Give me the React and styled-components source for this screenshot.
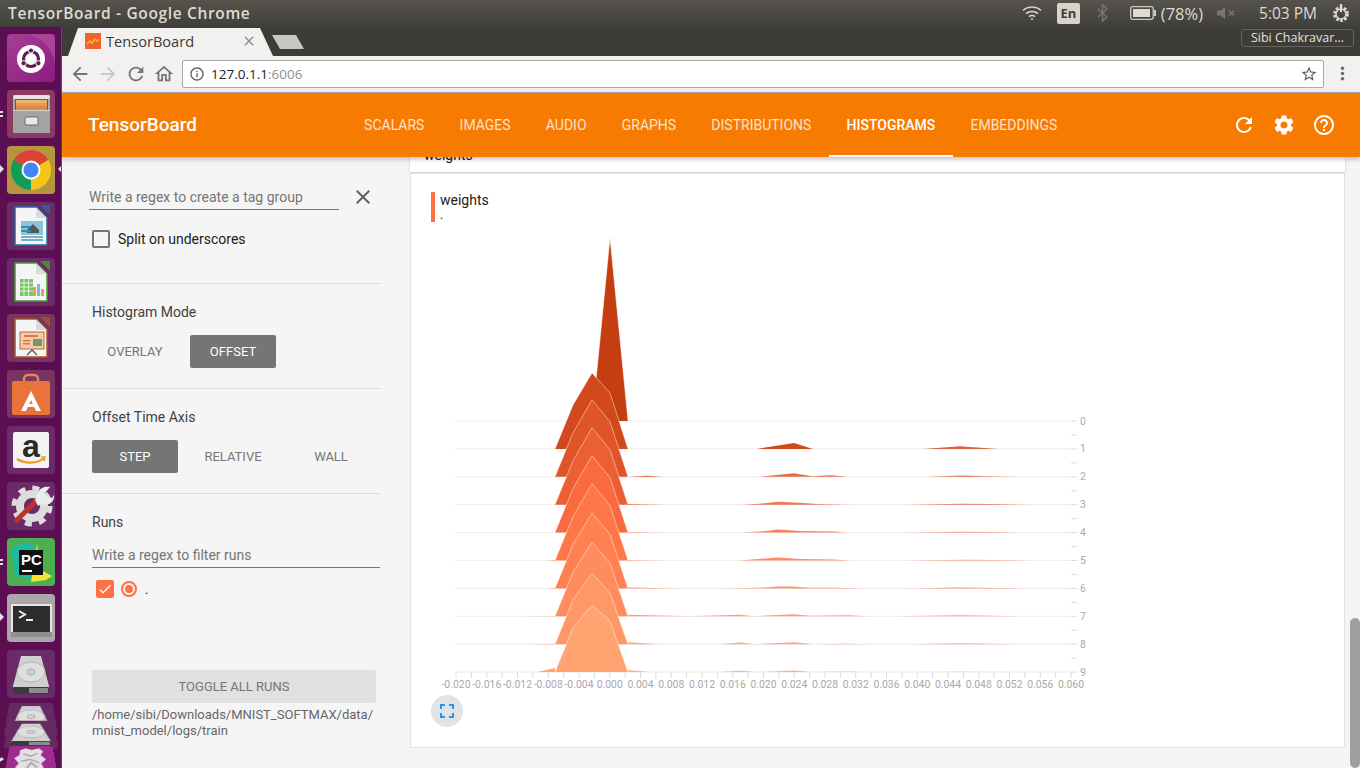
import React from 'react';
import styled, { createGlobalStyle } from 'styled-components';
import {
  MdArrowBack,
  MdArrowForward,
  MdCheck,
  MdClose,
  MdFullscreen,
  MdHelpOutline,
  MdInfoOutline,
  MdMoreVert,
  MdOutlineHome,
  MdRefresh,
  MdSettings,
  MdStarBorder,
} from 'react-icons/md';

const GlobalStyle = createGlobalStyle`
  html, body {
    margin: 0;
    padding: 0;
    overflow: hidden;
    background: #f5f5f5;
    font-family: Roboto, "Liberation Sans", sans-serif;
  }
  * { box-sizing: border-box; }
`;

const Screen = styled.div`
  width: 1360px;
  height: 768px;
  display: flex;
  flex-direction: column;
  overflow: hidden;
`;

/* ---------- ubuntu panel ---------- */

const TopPanel = styled.div`
  height: 27px;
  flex: none;
  display: flex;
  align-items: center;
  padding: 0 9px 1px 8px;
  background: linear-gradient(#55534c, #403f3a);
  color: #dfdbd2;
  font-family: "Open Sans", "Liberation Sans", sans-serif;
`;

const WindowTitle = styled.div`
  font-size: 15.5px;
  font-weight: 600;
  letter-spacing: 0.65px;
  margin-right: auto;
`;

const Indicator = styled.div`
  margin-left: ${props => props.$ml}px;
  display: flex;
  align-items: center;
  font-size: ${props => props.$size || 15}px;
  white-space: nowrap;
`;

const LangBox = styled.div`
  width: 23px;
  height: 21px;
  border-radius: 2px;
  background: #d8d4cc;
  color: #3c3b37;
  font-size: 13px;
  font-weight: 700;
  display: flex;
  align-items: center;
  justify-content: center;
`;

const Body = styled.div`
  flex: 1;
  min-height: 0;
  display: flex;
`;

/* ---------- launcher ---------- */

const Launcher = styled.div`
  width: 62px;
  flex: none;
  display: flex;
  flex-direction: column;
  gap: 8px;
  padding: 7px 0 0 7px;
  background: #5b0f52;
  border-right: 1px solid #7a3d72;
  overflow: hidden;
`;

const Tile = styled.div`
  position: relative;
  width: 48px;
  height: 48px;
  flex: none;
  border-radius: 4px;
  background: ${props => props.$bg};
  margin-top: ${props => props.$mt || 0}px;
  ${props => props.$tilt && `transform: perspective(150px) rotateX(${props.$tilt}deg);`}
  svg { display: block; }
`;

const Pip = styled.span`
  position: absolute;
  left: -7px;
  top: 21px;
  width: 3px;
  height: 2px;
  background: #e8e2e6;
  box-shadow: 0 4px 0 #e8e2e6;
`;

const Arrow = styled.span`
  position: absolute;
  top: 19px;
  ${props => (props.$right ? 'right: -7px;' : 'left: -7px;')}
  border-top: 4px solid transparent;
  border-bottom: 4px solid transparent;
  ${props =>
    props.$right ? 'border-right: 4px solid #e8e2e6;' : 'border-left: 4px solid #e8e2e6;'}
`;

const Icon = ({ children }) => (
  <svg width="48" height="48" viewBox="0 0 48 48">
    {children}
  </svg>
);

const UbuntuIcon = () => (
  <Icon>
    <path d="M20 0h24a4 4 0 0 1 4 4v24C44 12 34 4 20 0z" fill="#b95aa8" opacity="0.5" />
    <circle cx="24" cy="25" r="14" fill="#fff" />
    <circle cx="24" cy="25" r="7.500" fill="none" stroke="#5e1a57" strokeWidth="3.200" />
    <circle cx="24" cy="16.500" r="2.600" fill="#5e1a57" stroke="#fff" strokeWidth="1" />
    <circle cx="16.600" cy="29.200" r="2.600" fill="#5e1a57" stroke="#fff" strokeWidth="1" />
    <circle cx="31.400" cy="29.200" r="2.600" fill="#5e1a57" stroke="#fff" strokeWidth="1" />
  </Icon>
);

const FilesIcon = () => (
  <Icon>
    <rect x="6" y="5" width="37" height="38" rx="2" fill="#a9a9a7" />
    <rect x="6" y="5" width="37" height="4" rx="2" fill="#e4e4e2" />
    <rect x="8" y="9" width="33" height="11" fill="#6f5a45" />
    <rect x="9" y="10" width="31" height="3" fill="#f0b070" />
    <rect x="9" y="13" width="31" height="3" fill="#e89a55" />
    <rect x="9" y="16" width="31" height="4" fill="#dc8a48" />
    <rect x="6" y="20" width="37" height="23" fill="#a3a3a1" />
    <rect x="6" y="20" width="37" height="1" fill="#d5d5d3" />
    <rect x="18" y="27" width="13" height="8" rx="1" fill="#e9e9e7" stroke="#6c6c6a" />
  </Icon>
);

const ChromeIcon = () => (
  <Icon>
    <path d="M6.700 14a20 20 0 0 1 34.600 0L24 24z" fill="#db4437" />
    <path d="M41.300 14A20 20 0 0 1 24 44L24 24z" fill="#f5c518" />
    <path d="M24 44A20 20 0 0 1 6.700 14L24 24z" fill="#0f9d58" />
    <circle cx="24" cy="24" r="9.500" fill="#fff" />
    <circle cx="24" cy="24" r="7.600" fill="#4285f4" />
  </Icon>
);

const DocIcon = ({ edge, children }) => (
  <Icon>
    <path d="M33 3h10v10z" fill={edge} opacity="0.8" />
    <path d="M8 5h21l11 11v27H8z" fill="#f4f6f6" stroke={edge} strokeWidth="1.500" />
    <path d="M29 5v11h11z" fill="#d8dcdc" />
    {children}
  </Icon>
);

const WriterIcon = () => (
  <DocIcon edge="#1f6e9c">
    <rect x="14" y="19" width="22" height="14" fill="#8ec3dc" />
    <path d="M20 28l6-6 6 6v3H20z" fill="#4a5d52" />
    <rect x="14" y="34" width="22" height="2" fill="#6db0d2" />
    <rect x="14" y="37" width="22" height="2" fill="#6db0d2" />
    <rect x="14" y="24" width="10" height="2" fill="#2f8ab8" />
    <rect x="14" y="28" width="10" height="2" fill="#2f8ab8" />
  </DocIcon>
);

const CalcIcon = () => (
  <DocIcon edge="#43a02c">
    <rect x="13" y="21" width="13" height="17" fill="#7ac465" />
    <path
      d="M13 25h13M13 29h13M13 33h13M17 21v17M21.500 21v17"
      stroke="#e6f5e0"
      strokeWidth="1"
    />
    <rect x="26" y="29" width="3" height="9" fill="#e4a24a" />
    <rect x="30" y="26" width="3" height="12" fill="#7fb6d8" />
    <rect x="34" y="31" width="3" height="7" fill="#e4a24a" />
  </DocIcon>
);

const ImpressIcon = () => (
  <DocIcon edge="#a8562a">
    <rect x="13" y="18" width="24" height="17" fill="#f6c9ac" stroke="#b56a3c" />
    <rect x="17" y="21" width="14" height="2" fill="#d77a40" />
    <rect x="16" y="26" width="7" height="1.500" fill="#d77a40" />
    <rect x="16" y="29" width="7" height="1.500" fill="#d77a40" />
    <rect x="26" y="25" width="9" height="7" fill="#6f9c5e" />
    <path d="M20 41l5-5 5 5" fill="none" stroke="#555" strokeWidth="1.300" />
  </DocIcon>
);

const StoreIcon = () => (
  <Icon>
    <path d="M17 14v-5a4 4 0 0 1 4-4h6a4 4 0 0 1 4 4v5" fill="none" stroke="#e8855a" strokeWidth="2.500" />
    <rect x="5" y="11" width="38" height="34" rx="2" fill="#e8743c" />
    <path d="M24 21l10 20h-5l-5-11-5 11h-5z" fill="#fff" />
    <rect x="18" y="34" width="12" height="3" fill="#fff" />
  </Icon>
);

const AmazonGlyph = styled.text`
  font-family: "Liberation Sans", sans-serif;
  font-size: 32px;
  font-weight: 700;
  fill: #2a2a2a;
`;

const AmazonIcon = () => (
  <Icon>
    <rect x="6" y="6" width="36" height="36" rx="2" fill="#f4f3f3" />
    <AmazonGlyph x="24" y="31" textAnchor="middle">
      a
    </AmazonGlyph>
    <path d="M10 33c8 5 20 5 27-1" fill="none" stroke="#f39a1f" strokeWidth="2.200" />
    <path d="M34 31l4 0-1 4" fill="none" stroke="#f39a1f" strokeWidth="1.500" />
  </Icon>
);

const ToolsIcon = () => (
  <Icon>
    <circle cx="25" cy="24" r="18" fill="none" stroke="#dcdcdc" strokeWidth="5" strokeDasharray="7 7.100" />
    <circle cx="25" cy="24" r="12" fill="none" stroke="#dcdcdc" strokeWidth="8" />
    <path d="M10 38L31 17" stroke="#c0332b" strokeWidth="5" strokeLinecap="round" />
    <path d="M28 18l3-8c2-4 7-6 12-5l-5 6 2 4 5 1 2-3c1 6-5 12-13 9l-3 2z" fill="#ececec" />
  </Icon>
);

const PcGlyph = styled.text`
  font-family: "Liberation Sans", sans-serif;
  font-size: 15px;
  font-weight: 700;
  fill: #fff;
`;

const PyCharmIcon = () => (
  <Icon>
    <path d="M4 10l16-6 14 8-4 30-22-4z" fill="#21b8a4" />
    <path d="M30 6l4 26 11 6-6 4-15 2z" fill="#f2e33a" />
    <rect x="12" y="12" width="24" height="25" fill="#111" />
    <PcGlyph x="14" y="27">
      PC
    </PcGlyph>
    <rect x="15" y="32" width="10" height="2" fill="#fff" />
  </Icon>
);

const TerminalIcon = () => (
  <Icon>
    <rect x="4" y="10" width="41" height="33" rx="1" fill="#e7e7e7" />
    <rect x="4" y="38" width="41" height="5" fill="#8f8f8f" />
    <rect x="6" y="12" width="37" height="26" fill="#2c2c2c" />
    <path d="M12 17l6 3.500-6 3.500" fill="none" stroke="#eee" strokeWidth="2" />
    <rect x="19" y="25" width="7" height="2" fill="#eee" />
  </Icon>
);

const DiskIcon = () => (
  <Icon>
    <path d="M14 6h20l8 30v6a2 2 0 0 1-2 2H8a2 2 0 0 1-2-2v-6z" fill="#cfcfcf" />
    <ellipse cx="24" cy="22" rx="14" ry="10" fill="#dedede" stroke="#b5b5b5" />
    <ellipse cx="24" cy="22" rx="4" ry="3" fill="#cfcfcf" stroke="#aaa" />
    <rect x="6" y="37" width="36" height="7" rx="1" fill="#3a3a3a" />
    <rect x="22" y="38" width="19" height="5" fill="#8c8c8c" />
  </Icon>
);

const TrashIcon = () => (
  <Icon>
    <path d="M12 8l6-4 7 3 8-3 4 6-3 6 5 7-5 6 2 7-8 2-6 6-8-3-5-6 3-6-5-8 5-5z" fill="#e3e0e3" />
    <path d="M16 14l8 4 7-5M14 26l9-3 9 5M20 36l4-8 6 7" stroke="#a9a3a8" strokeWidth="2" fill="none" />
  </Icon>
);

/* ---------- chrome ---------- */

const Browser = styled.div`
  flex: 1;
  min-width: 0;
  display: flex;
  flex-direction: column;
`;

const TabStrip = styled.div`
  height: 29px;
  flex: none;
  display: flex;
  background: #3d3c37;
  padding: 1px 6px 0 6px;
`;

const Tab = styled.div`
  width: 205px;
  height: 28px;
  display: flex;
  align-items: center;
  padding: 0 16px 2px 17px;
  background: #f2f1f0;
  clip-path: polygon(0 100%, 10px 0, 192px 0, 100% 100%);
  color: #3a3a3a;
  font-family: "Open Sans", "Liberation Sans", sans-serif;
  font-size: 14.6px;
`;

const Favicon = styled.svg`
  width: 16px;
  height: 16px;
  margin-right: 5px;
  flex: none;
`;

const TabClose = styled(MdClose)`
  margin-left: auto;
  color: #8b8b8b;
  font-size: 16px;
`;

const NewTab = styled.div`
  width: 32px;
  height: 14px;
  margin: 7px 0 0 -1px;
  background: #c9c7c4;
  clip-path: polygon(0 0, 24px 0, 100% 100%, 8px 100%);
`;

const AccountChip = styled.div`
  margin: 1px 0 0 auto;
  width: 113px;
  height: 18px;
  border: 1px solid #66645f;
  border-radius: 3px;
  color: #e4e2dc;
  font-family: "Open Sans", "Liberation Sans", sans-serif;
  font-size: 12.5px;
  line-height: 16px;
  text-align: center;
  white-space: nowrap;
`;

const Toolbar = styled.div`
  height: 37px;
  flex: none;
  display: flex;
  align-items: center;
  padding: 0 0 1px 4px;
  background: #f2f1f0;
  border-bottom: 1px solid #adadad;
`;

const NavButton = styled.div`
  width: 28px;
  display: flex;
  justify-content: center;
  color: ${props => (props.$off ? '#c9c9c9' : '#757575')};
  font-size: ${props => props.$size || 21}px;
  svg { display: block; }
`;

const UrlBox = styled.div`
  flex: 1;
  height: 28px;
  margin-left: 4px;
  display: flex;
  align-items: center;
  padding: 0 5px 0 6px;
  background: #fff;
  border: 1px solid #a9a9a9;
  border-radius: 2px;
  font-family: "Open Sans", "Liberation Sans", sans-serif;
  font-size: 13.5px;
  color: #222;
  svg { display: block; color: #5f5f5f; }
`;

const UrlHost = styled.span`
  margin-left: 6px;
`;

const UrlPort = styled.span`
  color: #8f8f8f;
`;

const UrlStar = styled.span`
  margin-left: auto;
  display: flex;
`;

const MenuButton = styled.div`
  width: 36px;
  display: flex;
  justify-content: center;
  color: #6b6b6b;
  font-size: 21px;
  svg { display: block; }
`;

/* ---------- tensorboard header ---------- */

const Header = styled.div`
  position: relative;
  z-index: 2;
  height: 64px;
  flex: none;
  display: flex;
  align-items: stretch;
  padding: 0 24px 0 26px;
  background: #f77b00;
  box-shadow: 0 2px 5px rgba(0, 0, 0, 0.26);
  color: #fff;
`;

const Brand = styled.div`
  width: 258.5px;
  font-size: 19px;
  font-weight: 500;
  line-height: 64px;
`;

const Tabs = styled.div`
  display: flex;
`;

const NavTab = styled.div`
  padding: 0 17.6px;
  line-height: 64px;
  font-size: 14px;
  font-weight: ${props => (props.$active ? 500 : 400)};
  color: ${props => (props.$active ? '#fff' : 'rgba(255, 255, 255, 0.8)')};
  box-shadow: ${props => (props.$active ? 'inset 0 -2px 0 #fff' : 'none')};
`;

const HeaderActions = styled.div`
  margin-left: auto;
  display: flex;
  align-items: center;
  gap: 16px;
  font-size: 24px;
  svg { display: block; }
`;

/* ---------- sidebar ---------- */

const Content = styled.div`
  flex: 1;
  min-height: 0;
  display: flex;
  background: #f5f5f5;
`;

const Sidebar = styled.div`
  width: 318px;
  flex: none;
`;

const Section = styled.div`
  padding: ${props => props.$pad || '20px 0 20px 30px'};
  border-bottom: ${props => (props.$last ? 'none' : '1px solid #dcdcdc')};
`;

const RegexRow = styled.div`
  display: flex;
  align-items: center;
`;

const TextInput = styled.div`
  width: ${props => props.$w}px;
  height: 26px;
  margin-top: ${props => props.$mt || 0}px;
  border-bottom: 1px solid #757575;
  color: #757575;
  font-size: 14px;
  line-height: 26px;
`;

const ClearButton = styled(MdClose)`
  margin-left: 12px;
  color: #616161;
  font-size: 24px;
`;

const CheckRow = styled.div`
  display: flex;
  align-items: center;
  margin: 20px 0 0 3px;
  font-size: 14px;
  color: #212121;
`;

const CheckBox = styled.span`
  width: 18px;
  height: 18px;
  flex: none;
  display: flex;
  align-items: center;
  justify-content: center;
  border-radius: 2px;
  border: ${props => (props.$checked ? 'none' : '2px solid #757575')};
  background: ${props => (props.$checked ? '#ff7043' : 'transparent')};
  color: #fff;
  font-size: 16px;
`;

const CheckLabel = styled.span`
  margin-left: 8px;
`;

const SectionTitle = styled.div`
  font-size: 14px;
  line-height: 16px;
  color: #424242;
`;

const ButtonGroup = styled.div`
  margin-top: 15px;
  display: grid;
  grid-template-columns: repeat(3, 86px);
  gap: 12px;
`;

const ModeButton = styled.div`
  height: 33px;
  border-radius: 2px;
  text-align: center;
  font-size: 13px;
  line-height: 33px;
  background: ${props => (props.$active ? '#757575' : 'transparent')};
  color: ${props => (props.$active ? '#fff' : '#757575')};
`;

const RunRow = styled.div`
  margin: 12px 0 0 4px;
  display: flex;
  align-items: center;
  font-size: 13px;
  color: #212121;
`;

const RadioRing = styled.span`
  margin-left: 7px;
  width: 16px;
  height: 16px;
  flex: none;
  display: flex;
  align-items: center;
  justify-content: center;
  border: 2px solid #ff7043;
  border-radius: 50%;
  &::after {
    content: '';
    width: 8px;
    height: 8px;
    border-radius: 50%;
    background: #ff7043;
  }
`;

const RunName = styled.span`
  margin-left: 8px;
`;

const ToggleAll = styled.div`
  margin-top: 72px;
  width: 284px;
  height: 33px;
  border-radius: 2px;
  background: #e0e0e0;
  color: #757575;
  font-size: 13px;
  line-height: 33px;
  text-align: center;
`;

const LogDir = styled.div`
  margin-top: 4px;
  width: 288px;
  font-size: 13px;
  line-height: 16px;
  color: #666;
`;

/* ---------- main ---------- */

const Main = styled.div`
  flex: 1;
  min-width: 0;
  padding: 0 5px 0 30px;
`;

const HiddenCard = styled.div`
  height: 15px;
  overflow: hidden;
  background: #fff;
  box-shadow: 0 1px 2px rgba(0, 0, 0, 0.2);
  padding-left: 14px;
  font-size: 14px;
  line-height: 16px;
  color: #212121;
`;

const HiddenCardTitle = styled.div`
  margin-top: -10px;
`;

const Card = styled.div`
  margin-top: 1px;
  height: 575px;
  padding: 18px 0 0 20px;
  background: #fff;
  border: 1px solid #e2e2e2;
`;

const ChartTitle = styled.div`
  height: 30px;
  padding-left: 5px;
  border-left: 4px solid #ff7043;
  color: #212121;
`;

const ChartTag = styled.div`
  font-size: 14px;
  line-height: 16px;
`;

const ChartRun = styled.div`
  font-size: 12px;
  line-height: 14px;
`;

const ChartSvg = styled.svg`
  display: block;
  margin-top: 8px;
`;

const AxisText = styled.text`
  font-family: Roboto, sans-serif;
  font-size: 10.4px;
  fill: #a9a9a9;
`;

const FitButton = styled.div`
  margin-top: 3px;
  width: 32px;
  height: 32px;
  border-radius: 50%;
  background: #e3e3e3;
  color: #2196f3;
  font-size: 24px;
  display: flex;
  align-items: center;
  justify-content: center;
`;

const ScrollTrack = styled.div`
  width: 10px;
  flex: none;
  display: flex;
  flex-direction: column;
  justify-content: flex-end;
`;

const ScrollThumb = styled.div`
  height: 150px;
  border-radius: 5px;
  background: #9e9e9e;
`;

/* ---------- histogram data ---------- */

const xOf = v => 609.75 + v * 7687.5;
const rowY = i => 421 + i * 27.9;

const tops = [0, 76, 77, 77, 77, 77, 75, 74, 71, 67];
const knees = [0, 56, 55, 55, 55, 55, 54, 53, 51, 51];

// extra bumps per step, [x, height] pairs
const bumps = [
  [],
  [[757, 0], [794, 6], [813, 0]],
  [[628, 0], [647, 1], [663, 0]],
  [[628, 0.6], [665, 0]],
  [[628, 0.5], [662, 0]],
  [[547, 0], [555, 0.4]],
  [[545, 0], [555, 0.3]],
  [[523, 0], [555, 0.4]],
  [[530, 0], [555, 0.4]],
  [[538, 0], [555, 4]],
];

const sideBumps = [
  [],
  [[923, 0], [960, 2.7], [998, 0]],
  [[759, 0], [794, 3.5], [812, 0.5], [831, 1.5], [847, 0], [927, 0], [962, 1.3], [987, 0.6], [1023, 0]],
  [[741, 0], [760, 1], [778, 3], [800, 2], [817, 0.7], [850, 0], [905, 0], [960, 1], [993, 0.6], [1032, 0]],
  [[743, 0], [760, 1], [778, 3], [800, 1.6], [833, 1], [847, 0], [907, 0], [960, 0.8], [993, 0.6], [1022, 0]],
  [[628, 0.6], [665, 0], [740, 0], [778, 3], [800, 1.6], [833, 1], [850, 0], [905, 0], [967, 0.8], [1030, 0]],
  [[628, 1], [678, 0], [723, 0], [760, 0.6], [778, 2], [793, 2], [810, 0.6], [833, 0.6], [865, 0], [908, 0], [957, 1], [1020, 0]],
  [[628, 1.5], [690, 0], [740, 1.6], [753, 0], [793, 2], [810, 0.5], [847, 1], [868, 0], [897, 0], [960, 1], [1025, 0]],
  [[628, 2], [660, 0], [720, 0], [740, 1.6], [755, 0], [795, 2], [813, 0], [847, 0.5], [867, 0], [910, 0], [960, 1], [1017, 0]],
  [[628, 2], [650, 0], [720, 0], [740, 1.3], [757, 0], [795, 1.5], [810, 0], [850, 0.5], [863, 0], [913, 0], [960, 0.3], [1023, 0]],
];

const mix = (a, b, t) => a.map((c, i) => Math.round(c + (b[i] - c) * t));
const rowColor = i => {
  const dark = [197, 62, 18];
  const mid = [255, 112, 67];
  const light = [255, 163, 113];
  const c = i < 4.5 ? mix(dark, mid, i / 4.5) : mix(mid, light, (i - 4.5) / 4.5);
  return `rgb(${c.join(',')})`;
};

const toPath = (pts, y) =>
  `M${pts[0][0]} ${y}` + pts.map(([x, h]) => `L${x} ${(y - h).toFixed(1)}`).join('') + `L${pts[pts.length - 1][0]} ${y}Z`;

const peakPoints = i =>
  i === 0
    ? [[592, 0], [610, 183], [628, 0]]
    : [[555, 0], [573, 44], [592, tops[i]], [610, knees[i]], [628, 0]];

const Histogram = () => {
  const steps = [0, 1, 2, 3, 4, 5, 6, 7, 8, 9];
  const labels = Array.from({ length: 21 }, (_, i) => -0.02 + i * 0.004);
  const ticks = Array.from({ length: 41 }, (_, i) => -0.02 + i * 0.002);
  return (
    <ChartSvg width="680" height="462" viewBox="431 230 680 462">
      {steps.map(i => (
        <g key={i}>
          <line x1="455" x2="1071" y1={rowY(i)} y2={rowY(i)} stroke="#efefef" strokeWidth="1.200" />
          <line x1="1071" x2="1077" y1={rowY(i)} y2={rowY(i)} stroke="#dcdcdc" />
          {i < 9 && (
            <line x1="1071" x2="1077" y1={rowY(i) + 14} y2={rowY(i) + 14} stroke="#dcdcdc" />
          )}
          <AxisText x="1080" y={rowY(i) + 3.5}>
            {i}
          </AxisText>
        </g>
      ))}
      {ticks.map(t => (
        <line key={t} x1={xOf(t)} x2={xOf(t)} y1={rowY(9)} y2={rowY(9) + 6} stroke="#dcdcdc" />
      ))}
      {labels.map(v => (
        <AxisText key={v} x={xOf(v)} y="688" textAnchor="middle">
          {v.toFixed(3)}
        </AxisText>
      ))}
      {steps.map(i => {
        const peak = peakPoints(i);
        const y = rowY(i);
        const outline = peak.map(([x, h]) => `${x},${(y - h).toFixed(1)}`).join(' ');
        return (
          <g key={i} fill={rowColor(i)}>
            {bumps[i].length > 0 && <path d={toPath(bumps[i], y)} />}
            {sideBumps[i].length > 0 && <path d={toPath(sideBumps[i], y)} opacity="0.85" />}
            <path d={toPath(peak, y)} />
            <polyline points={outline} fill="none" stroke="rgba(255,255,255,0.45)" strokeWidth="1" />
          </g>
        );
      })}
    </ChartSvg>
  );
};

const TABS = ['Scalars', 'Images', 'Audio', 'Graphs', 'Distributions', 'Histograms', 'Embeddings'];

export default function App() {
  return (
    <Screen>
      <GlobalStyle />
      <TopPanel>
        <WindowTitle>TensorBoard - Google Chrome</WindowTitle>
        <Indicator $ml={0}>
          <svg width="20" height="16" viewBox="0 0 20 16" fill="none" stroke="#d8d4cc" strokeWidth="1.600">
            <path d="M1 5.500c5-4.600 13-4.600 18 0" />
            <path d="M4 8.700c3.500-3 8.500-3 12 0" />
            <path d="M7 11.700c1.800-1.400 4.200-1.400 6 0" />
            <circle cx="10" cy="14" r="1" fill="#d8d4cc" stroke="none" />
          </svg>
        </Indicator>
        <Indicator $ml={15}>
          <LangBox>En</LangBox>
        </Indicator>
        <Indicator $ml={17}>
          <svg width="12" height="18" viewBox="0 0 12 18" fill="none" stroke="#77756f" strokeWidth="1.500">
            <path d="M1 5l9 8-4.500 4V1L10 5l-9 8" />
          </svg>
        </Indicator>
        <Indicator $ml={21}>
          <svg width="26" height="14" viewBox="0 0 26 14">
            <rect x="0.700" y="0.700" width="22.500" height="12.600" rx="2" fill="none" stroke="#cfcbc3" strokeWidth="1.300" />
            <rect x="3" y="3" width="17" height="8" fill="#dfdbd2" />
            <rect x="24" y="4" width="2" height="6" fill="#cfcbc3" />
          </svg>
        </Indicator>
        <Indicator $ml={5} $size={16.500}>(78%)</Indicator>
        <Indicator $ml={14}>
          <svg width="20" height="12" viewBox="0 0 20 12">
            <path d="M0 3.500h3.500L8 0v12L3.500 8.500H0z" fill="#77756f" />
            <path d="M12 3.500l5 5M17 3.500l-5 5" stroke="#77756f" strokeWidth="1.600" />
          </svg>
        </Indicator>
        <Indicator $ml={22} $size={15.500}>5:03 PM</Indicator>
        <Indicator $ml={14}>
          <svg width="20" height="20" viewBox="0 0 20 20" fill="none" stroke="#dfdbd2">
            <circle cx="10" cy="11" r="6.500" strokeWidth="2.800" strokeDasharray="2.500 1.600" />
            <circle cx="10" cy="11" r="5" strokeWidth="1.500" />
            <path d="M10 1v8" strokeWidth="2.200" />
          </svg>
        </Indicator>
      </TopPanel>
      <Body>
        <Launcher>
          <Tile $bg="linear-gradient(135deg, #a53f95, #8b1c7e)"><UbuntuIcon /></Tile>
          <Tile $bg="#8a3a63"><Pip /><FilesIcon /></Tile>
          <Tile $bg="#b5963f"><Arrow /><Arrow $right /><ChromeIcon /></Tile>
          <Tile $bg="#6d2a68"><WriterIcon /></Tile>
          <Tile $bg="#6d2a68"><CalcIcon /></Tile>
          <Tile $bg="#7a3460"><ImpressIcon /></Tile>
          <Tile $bg="#7a3460"><StoreIcon /></Tile>
          <Tile $bg="#6d2a68"><AmazonIcon /></Tile>
          <Tile $bg="#6d2a68"><ToolsIcon /></Tile>
          <Tile $bg="#4caf50"><Pip /><PyCharmIcon /></Tile>
          <Tile $bg="#aba6aa"><Arrow /><TerminalIcon /></Tile>
          <Tile $bg="#6d2a68"><DiskIcon /></Tile>
          <Tile $bg="#662a62" $mt={-12} $tilt={45}><DiskIcon /></Tile>
          <Tile $bg="#662a62" $mt={-41} $tilt={55}><DiskIcon /></Tile>
          <Tile $bg="#a02c90" $mt={-29} $tilt={50}><Arrow /><TrashIcon /></Tile>
        </Launcher>
        <Browser>
          <TabStrip>
            <Tab>
              <Favicon viewBox="0 0 16 16">
                <rect width="16" height="16" fill="#f4622a" />
                <path d="M2 11l3-3 2 2 3-4 2 2 2-2" fill="none" stroke="#fbc02d" strokeWidth="1.400" />
              </Favicon>
              TensorBoard
              <TabClose />
            </Tab>
            <NewTab />
            <AccountChip>Sibi Chakravar…</AccountChip>
          </TabStrip>
          <Toolbar>
            <NavButton $size={22}><MdArrowBack /></NavButton>
            <NavButton $size={22} $off><MdArrowForward /></NavButton>
            <NavButton $size={22}><MdRefresh /></NavButton>
            <NavButton $size={22}><MdOutlineHome /></NavButton>
            <UrlBox>
              <MdInfoOutline size={16} />
              <UrlHost>127.0.1.1<UrlPort>:6006</UrlPort></UrlHost>
              <UrlStar><MdStarBorder size={18} /></UrlStar>
            </UrlBox>
            <MenuButton><MdMoreVert /></MenuButton>
          </Toolbar>
          <Header>
            <Brand>TensorBoard</Brand>
            <Tabs>
              {TABS.map(t => (
                <NavTab key={t} $active={t === 'Histograms'}>
                  {t.toUpperCase()}
                </NavTab>
              ))}
            </Tabs>
            <HeaderActions>
              <MdRefresh />
              <MdSettings />
              <MdHelpOutline />
            </HeaderActions>
          </Header>
          <Content>
            <Sidebar>
              <Section $pad="27px 0 35px 27px">
                <RegexRow>
                  <TextInput $w={250}>Write a regex to create a tag group</TextInput>
                  <ClearButton />
                </RegexRow>
                <CheckRow>
                  <CheckBox />
                  <CheckLabel>Split on underscores</CheckLabel>
                </CheckRow>
              </Section>
              <Section>
                <SectionTitle>Histogram Mode</SectionTitle>
                <ButtonGroup>
                  <ModeButton>OVERLAY</ModeButton>
                  <ModeButton $active>OFFSET</ModeButton>
                </ButtonGroup>
              </Section>
              <Section>
                <SectionTitle>Offset Time Axis</SectionTitle>
                <ButtonGroup>
                  <ModeButton $active>STEP</ModeButton>
                  <ModeButton>RELATIVE</ModeButton>
                  <ModeButton>WALL</ModeButton>
                </ButtonGroup>
              </Section>
              <Section $last $pad="20px 0 0 30px">
                <SectionTitle>Runs</SectionTitle>
                <TextInput $w={288} $mt={12}>
                  Write a regex to filter runs
                </TextInput>
                <RunRow>
                  <CheckBox $checked><MdCheck /></CheckBox>
                  <RadioRing />
                  <RunName>.</RunName>
                </RunRow>
                <ToggleAll>TOGGLE ALL RUNS</ToggleAll>
                <LogDir>/home/sibi/Downloads/MNIST_SOFTMAX/data/ mnist_model/logs/train</LogDir>
              </Section>
            </Sidebar>
            <Main>
              <HiddenCard>
                <HiddenCardTitle>weights</HiddenCardTitle>
              </HiddenCard>
              <Card>
                <ChartTitle>
                  <ChartTag>weights</ChartTag>
                  <ChartRun>.</ChartRun>
                </ChartTitle>
                <Histogram />
                <FitButton><MdFullscreen /></FitButton>
              </Card>
            </Main>
            <ScrollTrack>
              <ScrollThumb />
            </ScrollTrack>
          </Content>
        </Browser>
      </Body>
    </Screen>
  );
}
